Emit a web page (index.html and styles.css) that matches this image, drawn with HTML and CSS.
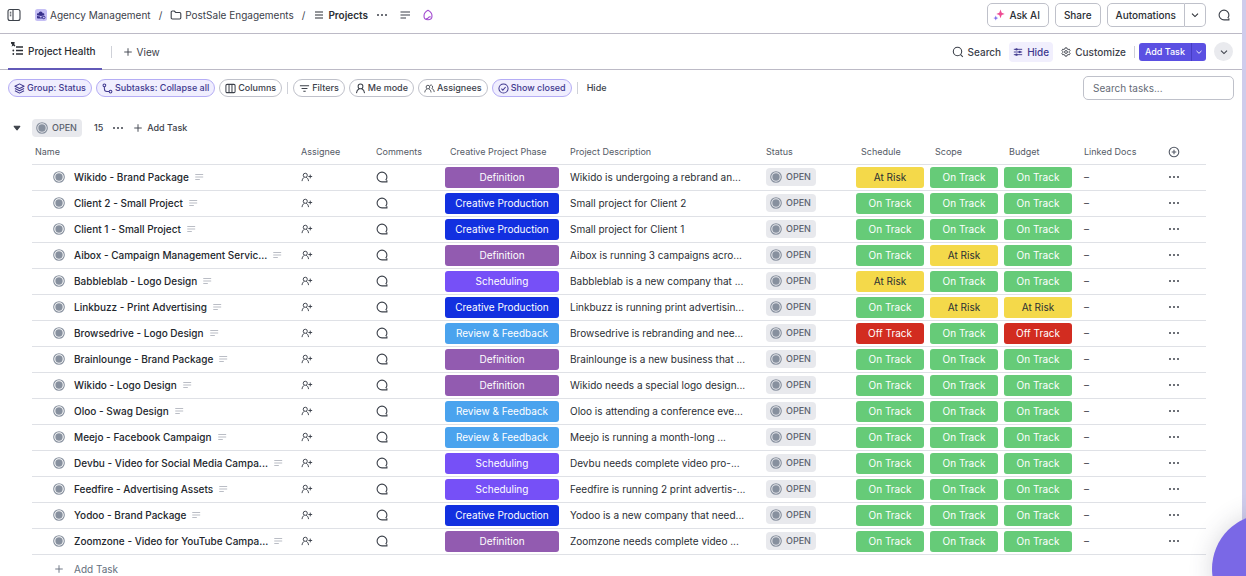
FILE: index.html
```html
<!DOCTYPE html>
<html lang="en">
<head>
<meta charset="utf-8">
<meta name="viewport" content="width=device-width, initial-scale=1">
<title>Projects</title>
<link rel="stylesheet" href="styles.css">
</head>
<body>
<svg class="sprite" aria-hidden="true">
  <symbol id="i-panel" viewBox="0 0 14 14"><rect x="1" y="1.5" width="12" height="11" rx="2"/><path d="M6 1.5v11M2.8 4.2h1.5M2.8 6h1.5M2.8 7.8h1.5"/></symbol>
  <symbol id="i-folder" viewBox="0 0 12 12"><path d="M1.2 3.2c0-.7.5-1.2 1.2-1.2h1.9l1.4 1.5h3.9c.7 0 1.2.5 1.2 1.2v4.1c0 .7-.5 1.2-1.2 1.2H2.4c-.7 0-1.2-.5-1.2-1.2z"/></symbol>
  <symbol id="i-list" viewBox="0 0 12 12"><path d="M2 3h8M2 6h8M2 9h8"/></symbol>
  <symbol id="i-lines" viewBox="0 0 12 12"><path d="M1.5 3h9.5M1.5 6h9.5M1.5 9h5.5"/></symbol>
  <symbol id="i-dots" viewBox="0 0 12 12"><g fill="currentColor" stroke="none"><circle cx="2" cy="6" r="1"/><circle cx="6" cy="6" r="1"/><circle cx="10" cy="6" r="1"/></g></symbol>
  <symbol id="i-brain" viewBox="0 0 12 12"><path d="M6 1.300C4 2.300 2 4.500 2 7c0 2.200 1.700 3.800 4 3.800s4-1.600 4-3.800c0-2.500-2-4.700-4-5.700z"/><path d="M3.800 9.800C5 10 6 9.500 6.500 8.600c.5-.8 1.400-1 2.300-.7"/></symbol>
  <symbol id="i-chat" viewBox="0 0 12 12"><path d="M9.700 9.200C10.400 8.400 10.900 7.300 10.900 6A4.900 4.900 0 1 0 6 10.900h4.900V9.300"/></symbol>
  <symbol id="i-pinlist" viewBox="0 0 14 16"><path d="M6 6h7M6 9.500h7M6 13h7" stroke-width="1.400"/><g fill="currentColor" stroke="none"><circle cx="3.300" cy="9.500" r=".9"/><circle cx="3.300" cy="13" r=".9"/><path d="M1 1h3.600v1.200L4.200 3l1.200 1.700-1 .9L3.200 4.500 1.600 5.800 2.200 3.600 1 2.400z"/></g></symbol>
  <symbol id="i-plus" viewBox="0 0 12 12"><path d="M6 1.500v9M1.500 6h9"/></symbol>
  <symbol id="i-search" viewBox="0 0 12 12"><circle cx="5.500" cy="5.500" r="4.200"/><path d="M8.600 8.600l2.200 2.200"/></symbol>
  <symbol id="i-sliders" viewBox="0 0 12 12"><path d="M1 2.800h10M1 6h10M1 9.200h10"/><g fill="currentColor" stroke="none"><circle cx="4.200" cy="2.800" r="1.400"/><circle cx="8" cy="6" r="1.400"/><circle cx="4.200" cy="9.200" r="1.400"/></g></symbol>
  <symbol id="i-gear" viewBox="0 0 12 12"><path d="M5 1h2l.4 1.400 1.100.6 1.400-.4 1 1.700L9.900 5.400v1.200l1 1.100-1 1.700-1.400-.4-1.100.6L7 11H5l-.4-1.400L3.500 9l-1.400.4-1-1.700 1-1.100V5.400l-1-1.100 1-1.700L3.500 3l1.100-.6z" stroke-linejoin="round"/><circle cx="6" cy="6" r="1.700"/></symbol>
  <symbol id="i-chev" viewBox="0 0 12 12"><path d="M3 4.700L6 7.600l3-2.900"/></symbol>
  <symbol id="i-layers" viewBox="0 0 12 12"><path d="M6 1l5 2.500L6 6 1 3.500zM1 6l5 2.500L11 6M1 8.500L6 11l5-2.500" stroke-linejoin="round"/></symbol>
  <symbol id="i-branch" viewBox="0 0 12 12"><circle cx="2.600" cy="2.500" r="1.500"/><circle cx="9.300" cy="9.300" r="1.500"/><path d="M2.600 4v2.300c0 1.700 1 3 2.800 3h2.400"/></symbol>
  <symbol id="i-columns" viewBox="0 0 12 12"><rect x="1" y="1.500" width="10" height="9" rx="1.300"/><path d="M4.400 1.500v9M7.600 1.500v9"/></symbol>
  <symbol id="i-filter" viewBox="0 0 12 12"><path d="M1 3h10M2.800 6h6.400M4.700 9h2.600"/></symbol>
  <symbol id="i-user" viewBox="0 0 12 12"><circle cx="6" cy="3.800" r="2.600"/><path d="M1.600 11c.2-2.300 1.300-3.900 3-4.700M10.400 11c-.2-2.300-1.300-3.900-3-4.700"/></symbol>
  <symbol id="i-users" viewBox="0 0 14 12"><circle cx="5" cy="4.200" r="2.300"/><path d="M1 11c.2-2.200 1.200-3.700 2.800-4.500M9 11c-.2-2.200-1.200-3.700-2.800-4.500M7.600 2a2.200 2.200 0 1 1 2 3.900M10.200 6c1.700.8 2.600 2.400 2.800 4.500"/></symbol>
  <symbol id="i-useradd" viewBox="0 0 14 12"><circle cx="5" cy="4" r="2.400"/><path d="M1.200 10.800c.2-2.200 1.200-3.700 2.700-4.400M8.800 10.800c-.2-2.200-1.200-3.700-2.700-4.400M10.800 3.200v4.400M8.600 5.400H13"/></symbol>
  <symbol id="i-check" viewBox="0 0 12 12"><circle cx="6" cy="6" r="5"/><path d="M3.700 6.200l1.600 1.600 3-3.400"/></symbol>
  <symbol id="i-pluscircle" viewBox="0 0 12 12"><circle cx="6" cy="6" r="4.800"/><path d="M6 3.700v4.600M3.700 6h4.600"/></symbol>
  <symbol id="i-status" viewBox="0 0 12 12"><circle cx="6" cy="6" r="5.300"/><circle cx="6" cy="6" r="3.700" fill="currentColor" stroke="none"/></symbol>
  <symbol id="i-caret" viewBox="0 0 12 12"><path d="M3.200 4.300h5.600L6 7.900z" fill="currentColor" stroke-linejoin="round"/></symbol>
  <symbol id="i-case" viewBox="0 0 12 12"><rect width="12" height="12" rx="2.500" fill="#c5bff5" stroke="none"/><g fill="#37308c" stroke="none"><path d="M2 5.300c0-.6.4-1 1-1h.8c0-1.100.8-1.800 1.900-1.800s1.800.7 1.800 1.800h.8c.6 0 1 .4 1 1v1L6 7 2 6.300z"/><path d="M2 7l3 .6v.8h1.500v-.8L9.700 7v1.500c0 .6-.4 1-1 1H3c-.6 0-1-.4-1-1z"/></g><circle cx="8.800" cy="8.500" r="1.300" fill="#c5bff5" stroke="#37308c" stroke-width=".8"/></symbol>
  <symbol id="i-spark" viewBox="0 0 12 12"><path d="M7.500.6l1.200 3.100 3 1.200-3 1.200-1.200 3.100-1.200-3.100-3-1.200 3-1.200z" fill="#ee4b93" stroke="none"/><path d="M2.800 6.600l.7 1.800 1.800.7-1.800.7-.7 1.800-.7-1.800L.3 9.100l1.800-.7z" fill="#7b68ee" stroke="none"/></symbol>
</svg>

<div class="app">
  <header class="topbar">
    <button class="plain" aria-label="Toggle sidebar"><svg class="icon icon-lg"><use href="#i-panel"/></svg></button>
    <nav class="crumbs" aria-label="Breadcrumb">
      <a href="#"><svg class="icon"><use href="#i-case"/></svg>Agency Management</a>
      <span>/</span>
      <a href="#"><svg class="icon"><use href="#i-folder"/></svg>PostSale Engagements</a>
      <span>/</span>
      <a href="#" class="current"><svg class="icon"><use href="#i-list"/></svg>Projects</a>
    </nav>
    <div class="crumb-tools">
      <button class="plain" aria-label="More"><svg class="icon"><use href="#i-dots"/></svg></button>
      <button class="plain" aria-label="Description"><svg class="icon"><use href="#i-lines"/></svg></button>
      <button class="plain brain" aria-label="Brain"><svg class="icon"><use href="#i-brain"/></svg></button>
    </div>
    <div class="top-actions">
      <button class="outline ask"><svg class="icon"><use href="#i-spark"/></svg>Ask AI</button>
      <button class="outline">Share</button>
      <div class="split">
        <button class="outline">Automations</button>
        <button class="outline arrow" aria-label="Automation options"><svg class="icon"><use href="#i-chev"/></svg></button>
      </div>
      <button class="plain chat" aria-label="Comments"><svg class="icon"><use href="#i-chat"/></svg></button>
    </div>
  </header>

  <div class="viewbar">
    <button class="tab"><svg class="icon icon-pin"><use href="#i-pinlist"/></svg>Project Health</button>
    <i class="divider"></i>
    <button class="plain add-view"><svg class="icon icon-sm"><use href="#i-plus"/></svg>View</button>
    <div class="view-actions">
      <button class="plain"><svg class="icon"><use href="#i-search"/></svg>Search</button>
      <button class="plain active"><svg class="icon icon-sm"><use href="#i-sliders"/></svg>Hide</button>
      <button class="plain"><svg class="icon icon-sm"><use href="#i-gear"/></svg>Customize</button>
      <i class="divider"></i>
      <div class="split primary">
        <button>Add Task</button>
        <button class="arrow" aria-label="Add options"><svg class="icon icon-sm"><use href="#i-chev"/></svg></button>
      </div>
      <button class="round" aria-label="Collapse"><svg class="icon"><use href="#i-chev"/></svg></button>
    </div>
  </div>

  <div class="filters">
    <button class="chip on"><svg class="icon"><use href="#i-layers"/></svg>Group: Status</button>
    <button class="chip on"><svg class="icon"><use href="#i-branch"/></svg>Subtasks: Collapse all</button>
    <button class="chip"><svg class="icon"><use href="#i-columns"/></svg>Columns</button>
    <i class="divider"></i>
    <button class="chip"><svg class="icon"><use href="#i-filter"/></svg>Filters</button>
    <button class="chip"><svg class="icon"><use href="#i-user"/></svg>Me mode</button>
    <button class="chip"><svg class="icon"><use href="#i-users"/></svg>Assignees</button>
    <button class="chip on"><svg class="icon"><use href="#i-check"/></svg>Show closed</button>
    <i class="divider"></i>
    <button class="plain hide">Hide</button>
    <input class="search" type="text" placeholder="Search tasks..." aria-label="Search tasks">
  </div>

  <main class="group">
    <div class="group-head">
      <button class="plain" aria-label="Collapse group"><svg class="icon"><use href="#i-caret"/></svg></button>
      <span class="status"><svg class="icon"><use href="#i-status"/></svg>OPEN</span>
      <span class="count">15</span>
      <button class="plain" aria-label="Group options"><svg class="icon"><use href="#i-dots"/></svg></button>
      <button class="plain"><svg class="icon icon-sm"><use href="#i-plus"/></svg>Add Task</button>
    </div>
    <table class="tasks">
      <colgroup><col><col class="c-assignee"><col class="c-comments"><col class="c-phase"><col class="c-desc"><col class="c-status"><col class="c-health"><col class="c-health"><col class="c-health"><col class="c-docs"><col class="c-more"></colgroup>
      <thead>
        <tr><th class="h-name">Name</th><th>Assignee</th><th>Comments</th><th class="h-pill">Creative Project Phase</th><th class="desc">Project Description</th><th>Status</th><th class="h-pill">Schedule</th><th class="h-pill">Scope</th><th class="h-pill">Budget</th><th class="docs">Linked Docs</th><th class="more"><button class="plain" aria-label="Add column"><svg class="icon"><use href="#i-pluscircle"/></svg></button></th></tr>
      </thead>
      <tbody id="rows"></tbody>
    </table>
    <button class="plain add-row"><svg class="icon icon-sm"><use href="#i-plus"/></svg>Add Task</button>
  </main>
</div>
<button class="bubble" aria-label="Help"></button>
<script src="app.js"></script>
</body>
</html>
```
FILE: styles.css
```css
* { box-sizing: border-box; }
body {
  margin: 0;
  min-height: 100vh;
  background: #fff;
  border-right: 4px solid #cfccec;
  color: #3c414a;
  font: 10px/16px Inter, "Liberation Sans", sans-serif;
  overflow: hidden;
}
button, input { font: inherit; color: inherit; margin: 0; }
button { padding: 0; border: 0; background: none; display: inline-flex; align-items: center; white-space: nowrap; cursor: pointer; }
a { color: inherit; text-decoration: none; }
.sprite { position: absolute; width: 0; height: 0; }
.icon { width: 12px; height: 12px; flex: none; fill: none; stroke: currentColor; stroke-width: 1.1; }
.icon-lg { width: 14px; height: 14px; }
.icon-sm { width: 10px; height: 10px; }
.icon-pin { width: 14px; height: 16px; }
.plain { gap: 4px; }
.divider { width: 1px; height: 12px; background: #cfd1d8; }

.topbar { display: flex; align-items: center; height: 34px; padding: 0 12px 3px 7px; border-bottom: 1px solid #bcbac6; }
.crumbs { display: flex; align-items: center; gap: 8px; margin-left: 14px; white-space: nowrap; }
.crumbs a { display: flex; align-items: center; gap: 3px; }
.crumbs .current { font-weight: 600; color: #2a2e34; }
.crumb-tools { display: flex; align-items: center; gap: 11px; margin-left: 8px; }
.brain { color: #a24bd0; }
.top-actions { display: flex; align-items: center; gap: 6px; margin-left: auto; }
.outline { height: 24px; padding: 0 8px; border: 1px solid #bfc1ca; border-radius: 5px; font-weight: 500; color: #2a2e34; }
.ask { gap: 4px; padding: 0 8px 0 5px; }
.split { display: flex; }
.split button:first-child { border-radius: 5px 0 0 5px; }
.split .arrow { border-radius: 0 5px 5px 0; border-left-width: 0; padding: 0 4px; }
.chat { margin-left: 6px; }

.viewbar { display: flex; align-items: center; height: 36px; padding: 0 9px 0 8px; border-bottom: 1px solid #bcbac6; }
.tab { align-self: stretch; gap: 4px; padding: 0 6px 0 2px; margin-bottom: -1px; border-bottom: 2px solid #6259b8; color: #2a2e34; font-weight: 500; }
.tab .icon { margin-bottom: 4px; }
.viewbar > .divider { margin: 0 11px 0 9px; }
.viewbar .plain { font-weight: 500; }
.viewbar .add-view { font-weight: 400; }
.view-actions { display: flex; align-items: center; gap: 4px; margin-left: auto; }
.view-actions .plain { height: 20px; padding: 0 4px; border-radius: 4px; }
.view-actions .active { background: #f1effd; color: #40398f; }
.primary button { height: 18px; padding: 0 6px; background: #5b50e2; color: #fff; font-size: 9px; font-weight: 500; }
.primary button:first-child { border-radius: 3px 0 0 3px; }
.primary .arrow { border-left: 1px solid #473dc4; border-radius: 0 3px 3px 0; padding: 0 2px; }
.round { width: 19px; height: 19px; margin-left: 4px; border-radius: 50%; background: #e9eaee; justify-content: center; }

.filters { display: flex; align-items: center; gap: 4px; height: 36px; padding: 0 8px; font-size: 9px; font-weight: 500; }
.chip { height: 18px; padding: 0 5px; gap: 2px; border: 1px solid #bfc1ca; border-radius: 9px; }
.chip .icon { width: 11px; height: 11px; }
.chip.on { border-color: #b5adf5; background: #f0eefe; color: #40398f; }
.filters .divider { margin: 0 1px; }
.hide { margin-left: 4px; }
.search { width: 151px; height: 24px; margin-left: auto; padding: 0 9px; border: 1px solid #bfc1ca; border-radius: 5px; font-size: 10px; font-weight: 400; background: #fff; }
.search::placeholder { color: #656b76; opacity: 1; }

.group { padding: 12px 36px 0 32px; }
.group-head { display: flex; align-items: center; gap: 9px; height: 20px; margin-left: -21px; font-size: 9px; font-weight: 500; }
.status { display: inline-flex; align-items: center; gap: 4px; height: 18px; padding: 0 5px 0 4px; border-radius: 4px; background: #e8e9ed; color: #5b616d; font-size: 9px; font-weight: 500; }
.status .icon, .name .icon:first-child { color: #87909e; }
.count { margin-left: 3px; }

.tasks { width: 100%; table-layout: fixed; border-collapse: collapse; }
.c-assignee { width: 75px; }
.c-comments { width: 66px; }
.c-phase { width: 120px; }
.c-desc { width: 204px; }
.c-status { width: 87px; }
.c-health { width: 74px; }
.c-docs { width: 66px; }
.c-more { width: 65px; }
.tasks th { height: 26px; padding: 2px 0 0; text-align: left; font-size: 9px; font-weight: 400; color: #545a66; white-space: nowrap; }
.tasks td { height: 26px; padding: 0; white-space: nowrap; vertical-align: middle; }
.tasks tr { border-bottom: 1px solid #dfe1e6; }
.tasks .h-name { padding-left: 3px; }
.tasks .h-pill { padding-left: 8px; }
.tasks .desc { padding-left: 8px; }
.tasks .docs { padding-left: 9px; }
.tasks button { display: flex; }
.tasks .more button { margin: 0 auto; }
.tasks td.desc { color: #2a2e34; }
.tasks .status { display: flex; width: 50px; }
.name { display: flex; align-items: center; gap: 9px; padding-left: 21px; font-weight: 500; color: #22262c; }
.name .note { width: 10px; color: #b3b7bf; margin-left: -4px; }
.pill { display: block; margin: 0 3px; border-radius: 3px; line-height: 21px; text-align: center; color: #fff; }
.definition { background: #925bb0; }
.creative { background: #1230e0; }
.scheduling { background: #7650f7; }
.review { background: #4aa3ee; }
.pill.on { background: #66cb78; }
.risk { background: #f4d94a; color: #2a2e34; }
.off { background: #d22c20; }
.add-row { height: 28px; margin-left: 22px; gap: 10px; color: #656f7d; }

.bubble { position: fixed; right: -76px; bottom: -48px; width: 110px; height: 110px; border-radius: 50%; background: #7a68e6; box-shadow: 0 0 24px rgba(60, 60, 80, .2); }
```
FILE: app.js
```js
const phases = {
  D: ["definition", "Definition"],
  C: ["creative", "Creative Production"],
  S: ["scheduling", "Scheduling"],
  R: ["review", "Review & Feedback"]
};
const health = { T: ["on", "On Track"], A: ["risk", "At Risk"], X: ["off", "Off Track"] };

// name, phase, description, schedule + scope + budget
const tasks = [
  ["Wikido - Brand Package", "D", "Wikido is undergoing a rebrand an...", "ATT"],
  ["Client 2 - Small Project", "C", "Small project for Client 2", "TTT"],
  ["Client 1 - Small Project", "C", "Small project for Client 1", "TTT"],
  ["Aibox - Campaign Management Servic...", "D", "Aibox is running 3 campaigns acro...", "TAT"],
  ["Babbleblab - Logo Design", "S", "Babbleblab is a new company that ...", "ATT"],
  ["Linkbuzz - Print Advertising", "C", "Linkbuzz is running print advertisin...", "TAA"],
  ["Browsedrive - Logo Design", "R", "Browsedrive is rebranding and nee...", "XTX"],
  ["Brainlounge - Brand Package", "D", "Brainlounge is a new business that ...", "TTT"],
  ["Wikido - Logo Design", "D", "Wikido needs a special logo design...", "TTT"],
  ["Oloo - Swag Design", "R", "Oloo is attending a conference eve...", "TTT"],
  ["Meejo - Facebook Campaign", "R", "Meejo is running a month-long ...", "TTT"],
  ["Devbu - Video for Social Media Campa...", "S", "Devbu needs complete video pro-...", "TTT"],
  ["Feedfire - Advertising Assets", "S", "Feedfire is running 2 print advertis-...", "TTT"],
  ["Yodoo - Brand Package", "C", "Yodoo is a new company that need...", "TTT"],
  ["Zoomzone - Video for YouTube Campa...", "D", "Zoomzone needs complete video ...", "TTT"]
];

const icon = (id, cls = "") => `<svg class="icon ${cls}"><use href="#i-${id}"/></svg>`;
const pill = ([cls, label]) => `<td><span class="pill ${cls}">${label.replace("&", "&amp;")}</span></td>`;

document.getElementById("rows").innerHTML = tasks.map(([name, phase, desc, marks]) => `
  <tr>
    <td><div class="name">${icon("status")}<span>${name}</span>${icon("lines", "note")}</div></td>
    <td><button aria-label="Assign">${icon("useradd")}</button></td>
    <td><button aria-label="Comment">${icon("chat")}</button></td>
    ${pill(phases[phase])}
    <td class="desc">${desc}</td>
    <td><span class="status">${icon("status")}OPEN</span></td>
    ${[...marks].map(m => pill(health[m])).join("")}
    <td class="docs">–</td>
    <td class="more"><button aria-label="Task options">${icon("dots")}</button></td>
  </tr>`).join("");
```
